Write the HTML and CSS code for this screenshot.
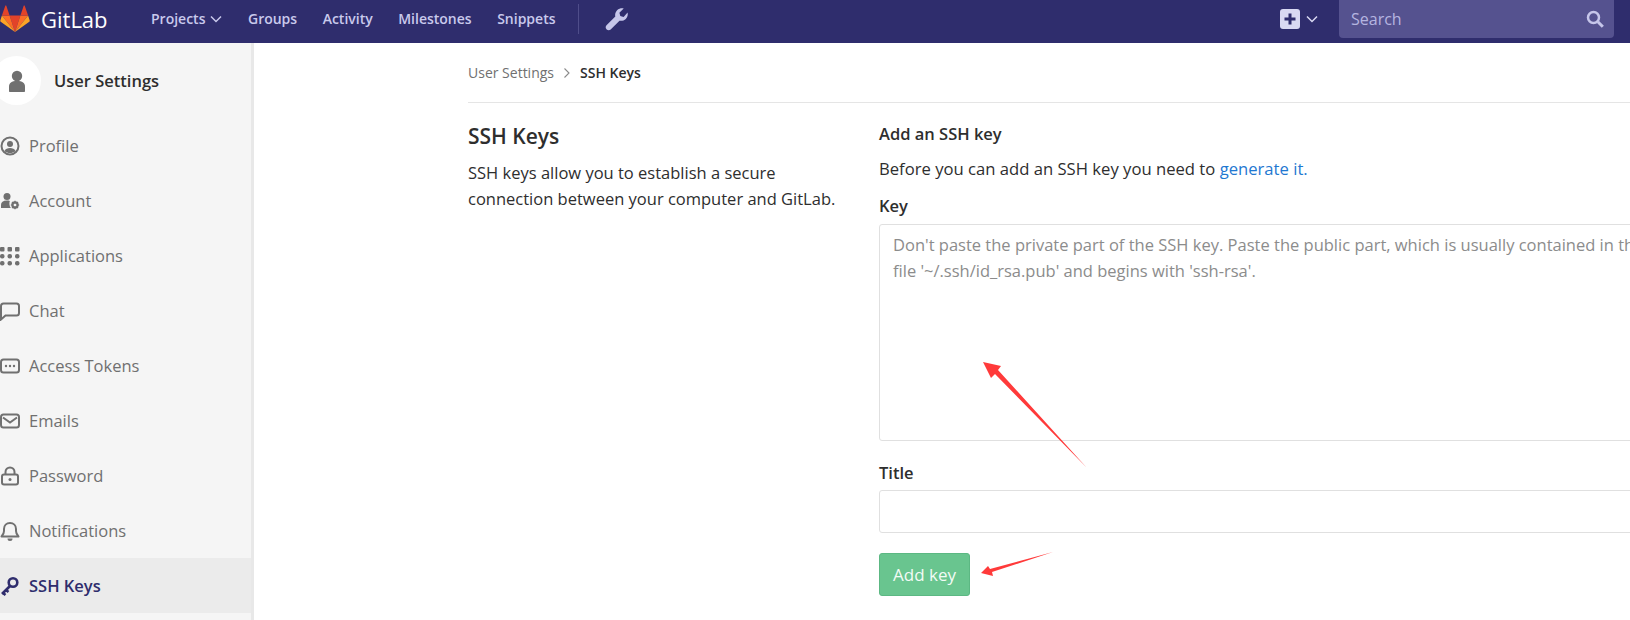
FILE: index.html
```html
<!DOCTYPE html>
<html lang="en">
<head>
<meta charset="utf-8">
<title>SSH Keys · User Settings · GitLab</title>
<link rel="stylesheet" href="styles.css">
</head>
<body>
<header class="topbar">
  <svg class="logo" viewBox="0 0 30 28" width="30" height="28"><path fill="#e24329" d="M15 27 9.6 10.4h10.8z"/><path fill="#fc6d26" d="M15 27 9.6 10.4H1.9z"/><path fill="#fca326" d="M1.9 10.4.3 15.5c-.2.5 0 1 .4 1.3L15 27z"/><path fill="#e24329" d="M1.9 10.4h7.7L6.3.8c-.2-.5-.8-.5-1 0z"/><path fill="#fc6d26" d="m15 27 5.4-16.6h7.7z"/><path fill="#fca326" d="m28.1 10.4 1.6 5.1c.2.5 0 1-.4 1.3L15 27z"/><path fill="#e24329" d="M28.1 10.4h-7.7L23.7.8c.2-.5.8-.5 1 0z"/></svg>
  <span class="brand">GitLab</span>
  <nav class="mainnav">
    <a class="navlink">Projects<svg class="chev" viewBox="0 0 12 8" width="12" height="8"><path d="M1 1.5 6 6.5l5-5" fill="none" stroke="currentColor" stroke-width="1.5"/></svg></a>
    <a class="navlink">Groups</a>
    <a class="navlink">Activity</a>
    <a class="navlink">Milestones</a>
    <a class="navlink">Snippets</a>
  </nav>
  <span class="navdiv"></span>
  <svg class="wrench" viewBox="0 0 24 24" width="24" height="24"><path fill="#c6c6ea" d="M22.6 5.6c.5 2.300-.1 4.700-1.800 6.300-1.700 1.700-4.100 2.300-6.300 1.800L5.700 22.500c-1.100 1.100-2.900 1.100-4 0l-.2-.2c-1.100-1.100-1.100-2.900 0-4l8.800-8.800c-.5-2.200.1-4.600 1.800-6.300C14 1.500 16.400.9 18.700 1.400L14.400 5.700l.9 3.300 3.300.9z"/></svg>
  <div class="right">
    <span class="plus"><svg viewBox="0 0 20 20" width="20" height="20"><rect width="20" height="20" rx="3" fill="#d9d9f2"/><path d="M10 4.500v11M4.500 10h11" stroke="#2f2d6d" stroke-width="3"/></svg></span>
    <svg class="chev plus-chev" viewBox="0 0 12 8" width="12" height="8"><path d="M1 1.500 6 6.500l5-5" fill="none" stroke="currentColor" stroke-width="1.500"/></svg>
    <div class="search">
      <span>Search</span>
      <svg viewBox="0 0 18 18" width="18" height="18"><circle cx="7.500" cy="7.500" r="5.500" fill="none" stroke="#c6c6ea" stroke-width="2.500"/><path d="m11.800 11.800 5 5" stroke="#c6c6ea" stroke-width="3"/></svg>
    </div>
  </div>
</header>
<div class="layout">
  <aside class="sidebar">
    <div class="sidehead">
      <span class="avatar"><svg viewBox="0 0 18 22" width="18" height="22"><circle cx="9" cy="6" r="5.200" fill="#707070"/><path fill="#707070" d="M1 21v-4.500C1 13 3.500 11 9 11s8 2 8 5.500V21c0 .6-.4 1-1 1H2c-.6 0-1-.4-1-1z"/></svg></span>
      <span class="sidetitle">User Settings</span>
    </div>
    <ul class="sidemenu">
      <li class="sideitem"><svg class="sico" viewBox="0 0 20 20"><circle cx="10" cy="10" r="8.500" fill="none" stroke="currentColor" stroke-width="2"/><circle cx="10" cy="8" r="3" fill="currentColor"/><path fill="currentColor" d="M4.500 15c1-2.300 3-3 5.500-3s4.500.7 5.500 3c-1.500 1.500-3.500 2-5.500 2s-4-.5-5.500-2z"/></svg>Profile</li>
      <li class="sideitem"><svg class="sico" viewBox="0 0 20 20"><circle cx="7" cy="5.500" r="3.500" fill="currentColor"/><path fill="currentColor" d="M1 17v-3c0-3 2-4.500 6-4.500 1 0 2 .1 2.800.4-.8 2.200-.4 5 1 7.100z"/><circle cx="15" cy="14" r="2.700" fill="none" stroke="currentColor" stroke-width="2"/><path d="M15 9.800v8.400M10.800 14h8.400M12 11l6 6M18 11l-6 6" stroke="currentColor" stroke-width="1.200"/><circle cx="15" cy="14" r="1.300" fill="#f5f5f5"/></svg>Account</li>
      <li class="sideitem"><svg class="sico" viewBox="0 0 20 20" fill="currentColor"><rect x="0" y="1" width="4.500" height="4.500" rx="1"/><rect x="7.500" y="1" width="4.500" height="4.500" rx="1"/><rect x="15" y="1" width="4.500" height="4.500" rx="1"/><rect x="0" y="8" width="4.500" height="4.500" rx="2"/><rect x="7.500" y="8" width="4.500" height="4.500" rx="2"/><rect x="15" y="8" width="4.500" height="4.500" rx="2"/><rect x="0" y="15" width="4.500" height="4.500" rx="2"/><rect x="7.500" y="15" width="4.500" height="4.500" rx="2"/><rect x="15" y="15" width="4.500" height="4.500" rx="2"/></svg>Applications</li>
      <li class="sideitem"><svg class="sico" viewBox="0 0 20 20"><path d="M1 18.500V5c0-1.500 1-2.500 2.500-2.500h13C18 2.500 19 3.500 19 5v7c0 1.500-1 2.500-2.500 2.500H5.500z" fill="none" stroke="currentColor" stroke-width="2"/></svg>Chat</li>
      <li class="sideitem"><svg class="sico" viewBox="0 0 20 20"><rect x="1" y="3.500" width="18" height="13" rx="2.500" fill="none" stroke="currentColor" stroke-width="2"/><circle cx="6" cy="10" r="1.200" fill="currentColor"/><circle cx="10" cy="10" r="1.200" fill="currentColor"/><circle cx="14" cy="10" r="1.200" fill="currentColor"/></svg>Access Tokens</li>
      <li class="sideitem"><svg class="sico" viewBox="0 0 20 20"><rect x="1" y="3.500" width="18" height="13" rx="2.500" fill="none" stroke="currentColor" stroke-width="2"/><path d="m3 6.500 7 5 7-5" fill="none" stroke="currentColor" stroke-width="2"/></svg>Emails</li>
      <li class="sideitem"><svg class="sico" viewBox="0 0 20 20"><rect x="2" y="8.500" width="16" height="10" rx="2" fill="none" stroke="currentColor" stroke-width="2"/><path d="M5.500 8.500V6a4.500 4.500 0 0 1 9 0v2.500" fill="none" stroke="currentColor" stroke-width="2"/><circle cx="10" cy="13.500" r="1.500" fill="currentColor"/></svg>Password</li>
      <li class="sideitem"><svg class="sico" viewBox="0 0 20 20"><path d="M1.500 15.500c1.500-1.500 2.500-3 2.500-5.500V8c0-3.500 2.500-6 6-6s6 2.500 6 6v2c0 2.500 1 4 2.500 5.500z" fill="none" stroke="currentColor" stroke-width="2" stroke-linejoin="round"/><path d="M7.500 17.500a2.500 2.500 0 0 0 5 0z" fill="currentColor"/></svg>Notifications</li>
      <li class="sideitem active"><svg class="sico" viewBox="0 0 20 20"><circle cx="13" cy="6.500" r="4.300" fill="none" stroke="currentColor" stroke-width="2.600"/><path d="M10 10 2 18M3 17l2.500 2M6 14l2.500 2" stroke="currentColor" stroke-width="2.600" fill="none"/></svg>SSH Keys</li>
    </ul>
  </aside>
  <main class="content">
    <div class="crumbs">
      <span>User Settings</span>
      <svg viewBox="0 0 8 12" width="8" height="12"><path d="m1.500 1.500 4.500 4.500-4.500 4.500" fill="none" stroke="#8a8a8a" stroke-width="1.100"/></svg>
      <strong>SSH Keys</strong>
    </div>
    <div class="columns">
      <section class="intro">
        <h1>SSH Keys</h1>
        <p>SSH keys allow you to establish a secure connection between your computer and GitLab.</p>
      </section>
      <form class="keyform">
        <h2>Add an SSH key</h2>
        <p class="lead">Before you can add an SSH key you need to <a class="gen">generate it.</a></p>
        <label class="lbl" for="key">Key</label>
        <textarea id="key" class="keybox" placeholder="Don't paste the private part of the SSH key. Paste the public part, which is usually contained in the&#10;file '~/.ssh/id_rsa.pub' and begins with 'ssh-rsa'."></textarea>
        <label class="lbl title-lbl" for="title">Title</label>
        <input id="title" class="titlebox" type="text">
        <button class="addkey" type="button">Add key</button>
      </form>
    </div>
  </main>
</div>
<svg class="arrows" viewBox="0 0 1630 620" width="1630" height="620">
  <path fill="#ff3a3a" d="M983 362 1001 366 998 370 1087 468 995 374 991 378z"/>
  <path fill="#ff3a3a" d="M981 573 988 566 990 569 1053 552 992 572 993 576z"/>
</svg>
</body>
</html>
```
FILE: styles.css
```css
* { box-sizing: border-box; }
html, body { margin: 0; height: 620px; overflow: hidden; background: #fff; }
body { font-family: "Open Sans", "Noto Sans", sans-serif; font-size: 16.5px; color: #2e2e2e; position: relative; }

.topbar { height: 43px; background: #2f2d6d; display: flex; align-items: center; color: #c6c6ea; padding-bottom: 6px; }
.logo { margin-left: 0; flex: none; }
.brand { margin-left: 11px; color: #fff; font-size: 22px; width: 66px; }
.mainnav { display: flex; margin-left: 44px; gap: 25.5px; font-size: 14px; font-weight: 600; }
.navlink { display: flex; align-items: center; gap: 5px; color: #c9c9ec; }
.navdiv { width: 1px; height: 30px; background: #4f4d8a; margin-left: 22px; }
.wrench { margin-left: 26px; }
.right { margin-left: auto; display: flex; align-items: center; padding-right: 16px; height: 100%; }
.plus { display: flex; }
.plus-chev { margin-left: 6px; color: #d9d9f2; }
.search { width: 275px; height: 38px; margin: 0 0 0 21px; align-self: flex-start; background: #55528f; border-radius: 0 0 4px 4px; display: flex; align-items: center; justify-content: space-between; padding: 0 10px 0 12px; color: #b5b5e0; font-size: 16px; }

.layout { display: flex; height: 577px; }
.sidebar { width: 254px; flex: none; background: #f5f5f5; border-right: 3px solid #e8e8e8; overflow: hidden; }
.sidehead { display: flex; align-items: center; height: 75px; margin-left: -8px; }
.avatar { width: 49px; height: 49px; background: #fff; border-radius: 50%; display: flex; align-items: center; justify-content: center; flex: none; }
.sidetitle { margin-left: 13px; font-weight: 600; font-size: 16.5px; color: #2e2e2e; }
.sidemenu { list-style: none; margin: 0; padding: 0; }
.sideitem { height: 55px; display: flex; align-items: center; color: #707070; font-size: 16.5px; padding-left: 0; }
.sico { width: 20px; height: 20px; margin-right: 9px; flex: none; }
.sideitem.active { background: #ebebeb; color: #2f2d6d; font-weight: 600; }

.content { flex: 1; min-width: 0; padding: 0 0 0 214px; }
.crumbs { height: 60px; border-bottom: 1px solid #e5e5e5; display: flex; align-items: center; gap: 9px; font-size: 14px; color: #707070; }
.crumbs strong { color: #2e2e2e; font-weight: 600; }
.columns { display: flex; padding-top: 17px; }
.intro { width: 411px; flex: none; }
.intro h1 { margin: 0; padding-top: 1px; font-size: 21px; line-height: 30px; font-weight: 600; }
.intro p { margin: 9px 0 0; line-height: 26px; width: 390px; }
.keyform { width: 840px; flex: none; display: flex; flex-direction: column; align-items: flex-start; }
.keyform h2 { margin: 1px 0 0; font-size: 16.5px; line-height: 26px; font-weight: 600; }
.lead { margin: 9px 0 0; line-height: 26px; font-size: 16.65px; }
.gen { color: #1f78d1; }
.lbl { margin-top: 11px; line-height: 26px; font-weight: 600; }
.keybox { width: 840px; height: 217px; margin-top: 5px; padding: 7px 13px; border: 1px solid #e0e0e0; border-radius: 3px; font: inherit; line-height: 26px; resize: none; display: block; }
.keybox::placeholder { color: #8c8c8c; opacity: 1; }
.title-lbl { margin-top: 19px; }
.titlebox { width: 840px; height: 43px; margin-top: 4px; border: 1px solid #e0e0e0; border-radius: 3px; display: block; }
.addkey { margin-top: 20px; width: 91px; height: 43px; background: #69c58f; border: 1px solid #5cb883; border-radius: 3px; color: #f2fbf6; font: inherit; font-size: 17px; padding: 0; }

.arrows { position: absolute; left: 0; top: 0; pointer-events: none; }
```
